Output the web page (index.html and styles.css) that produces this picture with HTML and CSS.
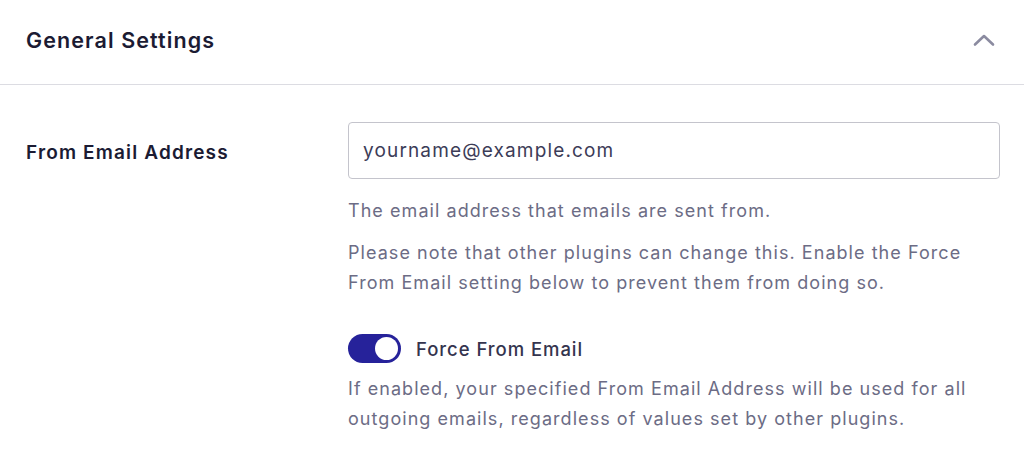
FILE: index.html
```html
<!DOCTYPE html>
<html>
<head>
<meta charset="utf-8">
<link rel="stylesheet" href="styles.css">
</head>
<body>
<section class="panel">
  <header class="panel-head">
    <h2 class="panel-title">General Settings</h2>
    <svg class="chevron" width="22" height="14" viewBox="0 0 22 14"><path d="M2 11.5 L11 3 L20 11.5" fill="none" stroke="#8b8ba0" stroke-width="2.6" stroke-linecap="round" stroke-linejoin="round"/></svg>
  </header>
  <div class="row">
    <label class="row-label">From Email Address</label>
    <div class="row-field">
      <div class="input">yourname@example.com</div>
      <p class="help first">The email address that emails are sent from.</p>
      <p class="help">Please note that other plugins can change this. Enable the Force From Email setting below to prevent them from doing so.</p>
      <div class="toggle-row">
        <span class="toggle"><span class="knob"></span></span>
        <span class="toggle-label">Force From Email</span>
      </div>
      <p class="help">If enabled, your specified From Email Address will be used for all outgoing emails, regardless of values set by other plugins.</p>
    </div>
  </div>
</section>
</body>
</html>
```

FILE: styles.css
```css
* { box-sizing: border-box; }
html, body { margin: 0; padding: 0; background: #fff; }
body { font-family: Inter, "Noto Sans", sans-serif; color: #1b1b33; }
.panel { width: 1024px; }
.panel-head {
  height: 85px;
  border-bottom: 1px solid #dcdce2;
  display: flex;
  align-items: center;
  justify-content: space-between;
  padding: 0 29px 0 26px;
}
.panel-title { margin: 0; font-size: 21.5px; font-weight: 600; color: #1b1b33; letter-spacing: 1.1px; position: relative; top: -2px; }
.chevron { display: block; position: relative; top: -2px; }
.row { display: flex; padding: 37px 24px 0 26px; }
.row-label { width: 322px; flex: none; font-size: 19px; font-weight: 600; color: #1b1b33; letter-spacing: 1.15px; padding-top: 19px; }
.row-field { width: 652px; }
.input {
  height: 57px;
  border: 1px solid #c4c4cc;
  border-radius: 4px;
  padding: 0 14px;
  display: flex;
  align-items: center;
  font-size: 19px;
  letter-spacing: 1.15px;
  color: #3c3c57;
}
.help { margin: 0; font-size: 18px; line-height: 30px; letter-spacing: 1.05px; color: #6c6c85; }
.help.first { margin-top: 17px; }
.help + .help { margin-top: 12px; }
.toggle-row { display: flex; align-items: center; gap: 15px; margin-top: 36px; margin-bottom: 11px; }
.toggle { width: 53px; height: 29px; border-radius: 15px; background: #26229a; display: flex; align-items: center; justify-content: flex-end; padding: 0 3px; }
.knob { width: 23px; height: 23px; border-radius: 50%; background: #fff; }
.toggle-label { font-size: 18.5px; font-weight: 500; letter-spacing: 0.95px; color: #34344e; }
```
